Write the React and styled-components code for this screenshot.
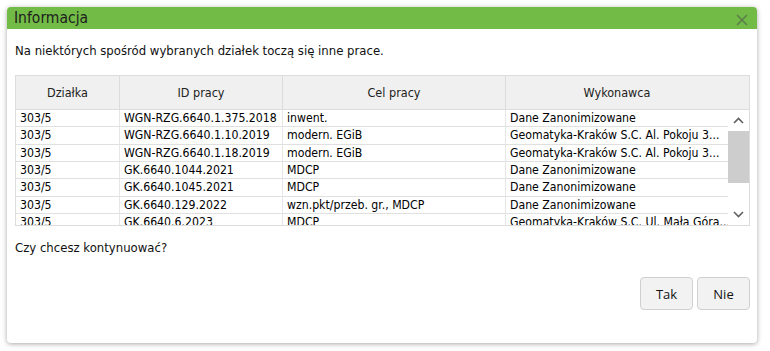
import React from 'react';
import styled, { createGlobalStyle } from 'styled-components';

const GlobalStyle = createGlobalStyle`
  html, body {
    margin: 0;
    padding: 0;
    background: #ffffff;
    width: 770px;
    height: 351px;
    overflow: hidden;
  }
`;

const Page = styled.div`
  width: 770px;
  height: 351px;
  padding: 7px 13px 8px 7px;
  box-sizing: border-box;
`;

const Dialog = styled.div`
  width: 750px;
  height: 336px;
  background: #fff;
  border-radius: 4px;
  box-shadow: 0 1px 5px rgba(0, 0, 0, 0.35);
  display: flex;
  flex-direction: column;
  overflow: hidden;
  font-family: "DejaVu Sans Condensed", "DejaVu Sans", Verdana, sans-serif;
  color: #111;
`;

const TitleBar = styled.div`
  height: 22px;
  background: #72bb46;
  display: flex;
  align-items: center;
  justify-content: space-between;
  padding: 0 8px 0 7px;
  flex-shrink: 0;
`;

const Title = styled.div`
  font-size: 15.5px;
  color: #1e1e1e;
  line-height: 22px;
`;

const CloseButton = styled.button`
  width: 14px;
  height: 14px;
  padding: 0;
  margin-top: 4px;
  border: none;
  background: transparent;
  display: flex;
  align-items: center;
  justify-content: center;
  svg { width: 12px; height: 12px; }
`;

const Body = styled.div`
  flex: 1;
  padding: 14px 7px 0 8px;
  display: flex;
  flex-direction: column;
`;

const Message = styled.div`
  font-size: 13px;
  line-height: 15px;
  margin-bottom: 17px;
`;

const TableFrame = styled.div`
  display: flex;
  border: 1px solid #dcdcdc;
  height: 151px;
  box-sizing: border-box;
`;

const TableMain = styled.div`
  flex: 1;
  display: flex;
  flex-direction: column;
  overflow: hidden;
`;

const Columns = '104px 163px 223px 223px';

const HeaderRow = styled.div`
  display: grid;
  grid-template-columns: ${Columns};
  height: 33px;
  flex-shrink: 0;
  background: #f0f0f0;
  border-bottom: 1px solid #dcdcdc;
`;

const HeaderCell = styled.div`
  display: flex;
  align-items: center;
  justify-content: center;
  font-size: 12.5px;
  color: #222;
  border-right: 1px solid #dcdcdc;
`;

const RowsArea = styled.div`
  flex: 1;
  overflow: hidden;
`;

const Row = styled.div`
  display: grid;
  grid-template-columns: ${Columns};
  height: 16.33px;
  border-bottom: 1px solid #e0e0e0;
`;

const Cell = styled.div`
  font-size: 12.2px;
  line-height: 17px;
  padding: 0 4px;
  white-space: nowrap;
  overflow: hidden;
  border-right: 1px solid #e6e6e6;
  color: #000;
`;

const ScrollColumn = styled.div`
  width: 21px;
  display: flex;
  flex-direction: column;
  flex-shrink: 0;
`;

const ScrollHeader = styled.div`
  height: 33px;
  background: #f0f0f0;
  border-bottom: 1px solid #dcdcdc;
  flex-shrink: 0;
`;

const Track = styled.div`
  flex: 1;
  display: flex;
  flex-direction: column;
  background: #fff;
`;

const Arrow = styled.div`
  height: 21px;
  display: flex;
  align-items: center;
  justify-content: center;
  flex-shrink: 0;
  svg { width: 11px; height: 7px; }
`;

const Thumb = styled.div`
  height: 52px;
  background: #cdcdcd;
`;

const Spacer = styled.div`
  flex: 1;
`;

const Question = styled.div`
  font-size: 13px;
  line-height: 15px;
  margin-top: 14px;
`;

const Footer = styled.div`
  display: flex;
  justify-content: flex-end;
  gap: 4px;
  margin-top: 22px;
`;

const Button = styled.button`
  width: 53px;
  height: 33px;
  border: 1px solid #d0d0d0;
  border-radius: 4px;
  background: #f2f2f2;
  font-family: "Open Sans", "Liberation Sans", sans-serif;
  font-size: 13px;
  color: #111;
  padding: 0;
`;

const rows = [
  ['303/5', 'WGN-RZG.6640.1.375.2018', 'inwent.', 'Dane Zanonimizowane'],
  ['303/5', 'WGN-RZG.6640.1.10.2019', 'modern. EGiB', 'Geomatyka-Kraków S.C. Al. Pokoju 3...'],
  ['303/5', 'WGN-RZG.6640.1.18.2019', 'modern. EGiB', 'Geomatyka-Kraków S.C. Al. Pokoju 3...'],
  ['303/5', 'GK.6640.1044.2021', 'MDCP', 'Dane Zanonimizowane'],
  ['303/5', 'GK.6640.1045.2021', 'MDCP', 'Dane Zanonimizowane'],
  ['303/5', 'GK.6640.129.2022', 'wzn.pkt/przeb. gr., MDCP', 'Dane Zanonimizowane'],
  ['303/5', 'GK.6640.6.2023', 'MDCP', 'Geomatyka-Kraków S.C. Ul. Mała Góra...'],
];

const headers = ['Działka', 'ID pracy', 'Cel pracy', 'Wykonawca'];

export default function App() {
  return (
    <>
      <GlobalStyle />
      <Page>
        <Dialog>
          <TitleBar>
            <Title>Informacja</Title>
            <CloseButton aria-label="Zamknij">
              <svg viewBox="0 0 12 12">
                <path d="M1 1L11 11M11 1L1 11" stroke="#5b7d4c" strokeWidth="1.5" fill="none" />
              </svg>
            </CloseButton>
          </TitleBar>
          <Body>
            <Message>Na niektórych spośród wybranych działek toczą się inne prace.</Message>
            <TableFrame>
              <TableMain>
                <HeaderRow>
                  {headers.map((h) => (
                    <HeaderCell key={h}>{h}</HeaderCell>
                  ))}
                </HeaderRow>
                <RowsArea>
                  {rows.map((r, i) => (
                    <Row key={i}>
                      {r.map((c, j) => (
                        <Cell key={j}>{c}</Cell>
                      ))}
                    </Row>
                  ))}
                </RowsArea>
              </TableMain>
              <ScrollColumn>
                <ScrollHeader />
                <Track>
                  <Arrow>
                    <svg viewBox="0 0 11 7">
                      <path d="M1 6L5.5 1.5L10 6" stroke="#606060" strokeWidth="1.6" fill="none" />
                    </svg>
                  </Arrow>
                  <Thumb />
                  <Spacer />
                  <Arrow>
                    <svg viewBox="0 0 11 7">
                      <path d="M1 1L5.5 5.5L10 1" stroke="#606060" strokeWidth="1.6" fill="none" />
                    </svg>
                  </Arrow>
                </Track>
              </ScrollColumn>
            </TableFrame>
            <Question>Czy chcesz kontynuować?</Question>
            <Footer>
              <Button>Tak</Button>
              <Button>Nie</Button>
            </Footer>
          </Body>
        </Dialog>
      </Page>
    </>
  );
}
